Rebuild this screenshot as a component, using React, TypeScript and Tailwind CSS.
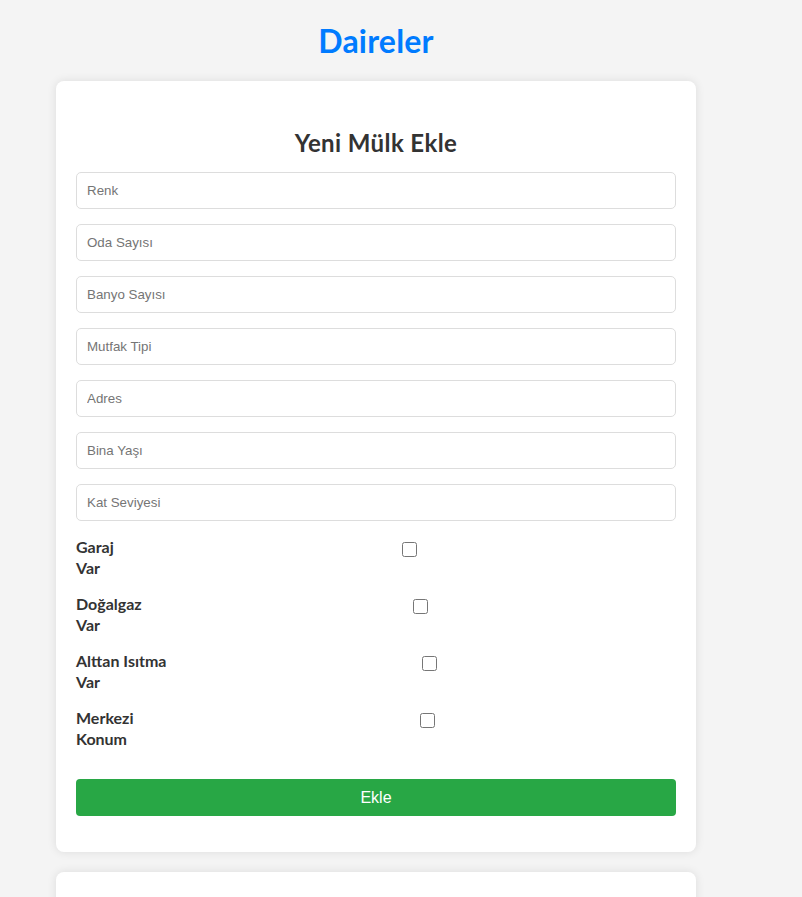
import React from 'react'

const fields = ['Renk', 'Oda Sayısı', 'Banyo Sayısı', 'Mutfak Tipi', 'Adres', 'Bina Yaşı', 'Kat Seviyesi']

// label genişlikleri: checkbox konumları referansla eşleşsin diye
const toggles = [
    { id: 'garaj', lines: ['Garaj', 'Var'], w: 'w-[66px]' },
    { id: 'dogalgaz', lines: ['Doğalgaz', 'Var'], w: 'w-[88px]' },
    { id: 'alttan', lines: ['Alttan Isıtma', 'Var'], w: 'w-[106px]' },
    { id: 'merkezi', lines: ['Merkezi', 'Konum'], w: 'w-[102px]' },
]

export default function App() {
    return (
        <div className="min-h-screen bg-[#f4f4f4] pt-[19px] font-['Lato',sans-serif] text-[#333]">
            <h1 className="ml-[56px] w-[640px] text-center text-[32px] font-bold leading-[43px] tracking-[0.2px] text-[#007bff]">
                Daireler
            </h1>
            <div className="ml-[56px] mt-[19px] w-[640px] rounded-lg bg-white px-5 pt-[46px] pb-9 shadow-[0_0_10px_rgba(0,0,0,0.1)]">
                <h2 className="mb-[13px] text-center text-[24px] font-bold leading-[32px] tracking-[0.4px]">Yeni Mülk Ekle</h2>
                <form onSubmit={(e) => e.preventDefault()}>
                    {fields.map((f) => (
                        <input
                            key={f}
                            type="text"
                            placeholder={f}
                            className="mb-[15px] block h-[37px] w-full rounded-[5px] border border-[#ddd] px-[10px] font-['Liberation_Sans',Arial,sans-serif] text-[13.33px] text-[#333] outline-none placeholder:text-[#757575]"
                        />
                    ))}
                    <div className="mt-[2px]">
                        {toggles.map((t) => (
                            <div key={t.id} className="mb-[15px] flex items-start">
                                <label htmlFor={t.id} className={`${t.w} text-[16px] font-bold leading-[21px]`}>
                                    {t.lines[0]}
                                    <br />
                                    {t.lines[1]}
                                </label>
                                <div className="flex flex-1 justify-center pt-[6px]">
                                    <input id={t.id} type="checkbox" className="h-[15px] w-[15px]" />
                                </div>
                            </div>
                        ))}
                    </div>
                    <button
                        type="submit"
                        className="mt-[30px] block h-[37px] w-full rounded-[4px] bg-[#28a745] font-['Liberation_Sans',Arial,sans-serif] text-[16px] text-white"
                    >
                        Ekle
                    </button>
                </form>
            </div>
            <div className="ml-[56px] mt-5 h-[200px] w-[640px] rounded-lg bg-white shadow-[0_0_10px_rgba(0,0,0,0.1)]" />
        </div>
    )
}
